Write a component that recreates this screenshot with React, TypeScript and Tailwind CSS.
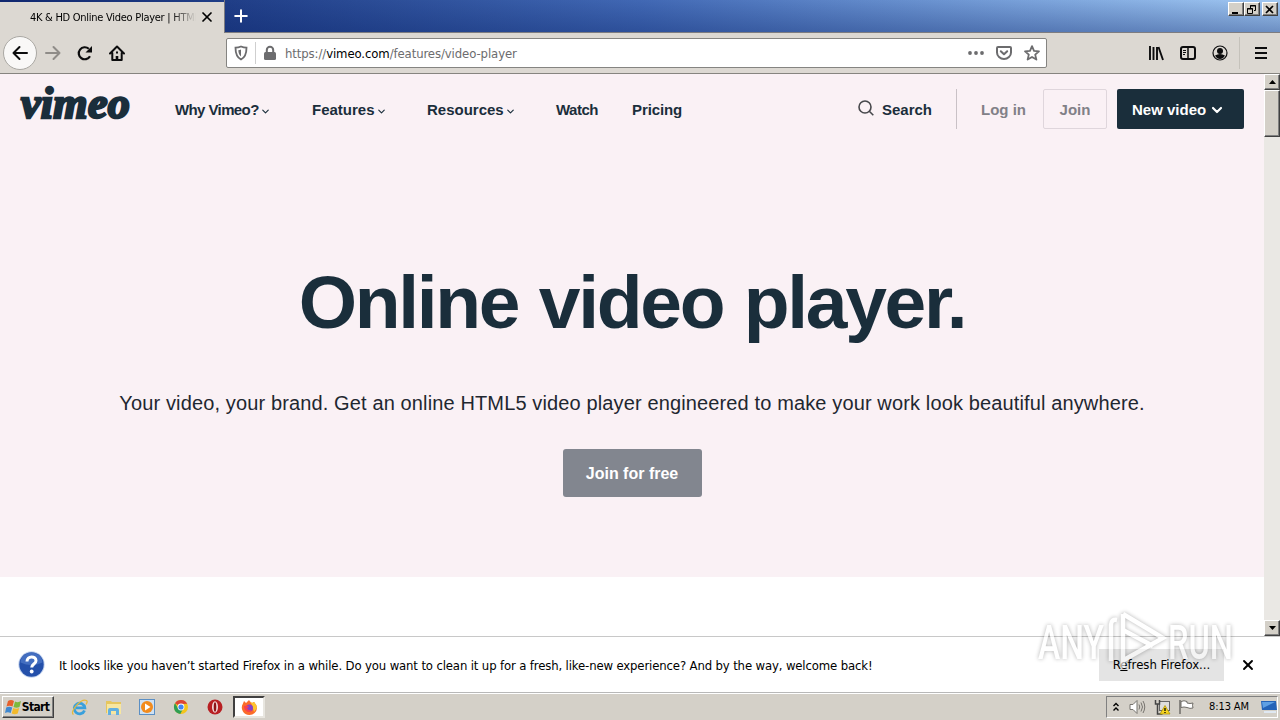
import type { ReactNode } from "react";
import { ChevronDown, Plus, X } from "lucide-react";

const links = [
  { label: "Why Vimeo?", menu: true, className: "w-[137px] tracking-[-0.600px]" },
  { label: "Features", menu: true, className: "w-[115px]" },
  { label: "Resources", menu: true, className: "w-[129px]" },
  { label: "Watch", menu: false, className: "w-[76px] tracking-[-0.500px]" },
  { label: "Pricing", menu: false, className: "w-[60px] tracking-[-0.100px]" },
];

function WinButton({ children, className = "" }: { children: ReactNode; className?: string }) {
  return (
    <div
      className={`flex items-center justify-center bg-[#d4d0c8] border border-t-white border-l-white border-r-[#404040] border-b-[#404040] shadow-[inset_-1px_-1px_0_#808080] ${className}`}
    >
      {children}
    </div>
  );
}

function TitleBar() {
  return (
    <div className="flex h-[33px] bg-linear-to-r from-[#10276f] via-[#4168b4] to-[#a1c8f2] relative">
      <div className="absolute inset-0 border-b border-[#7d7c80] bg-linear-to-b from-transparent to-[#0a246a]/35" />
      <div className="relative mt-[2px] h-[31px] w-[224px] bg-[#dcd8d2] flex items-center">
        <div className="ml-[30px] w-[166px] overflow-hidden whitespace-nowrap text-[11px] leading-[18px] tracking-[-0.270px] mask-r-from-85% mask-r-to-100%">
          4K &amp; HD Online Video Player | HTML5
        </div>
        <X className="ml-[3px] mb-[2px]" size={16} strokeWidth={2.6} />
      </div>
      <div className="relative flex-1 border-l border-[#7d7c80]">
        <Plus className="ml-[6px] mt-[6px] text-white" size={20} strokeWidth={2.4} />
      </div>
      <div className="relative flex pt-[2px] pr-[2px]">
        <WinButton className="w-4 h-[14px]">
          <svg width="12" height="11"><path d="M2 9h6" stroke="#000" strokeWidth="2" /></svg>
        </WinButton>
        <WinButton className="w-4 h-[14px]">
          <svg width="12" height="11" fill="none" stroke="#000">
            <path d="M4.500 4V1.500h5v5H8M4 2h6M1.500 4.500h5v5h-5zM1 5h6" />
          </svg>
        </WinButton>
        <WinButton className="w-4 h-[14px] ml-[2px]">
          <svg width="12" height="11"><path d="M2 2l7 7M9 2l-7 7" stroke="#000" strokeWidth="1.700" /></svg>
        </WinButton>
      </div>
    </div>
  );
}

function ToolBar() {
  return (
    <div className="flex items-center h-[41px] bg-[#dcd8d2] border-b border-[#86847f]">
      <div className="ml-[3px] w-[34px] h-[34px] rounded-full bg-[#f9f8f7] border border-[#aaa8a3] flex items-center justify-center">
        <svg width="16" height="16" fill="none" stroke="#0c0c0d" strokeWidth="2" strokeLinecap="round" strokeLinejoin="round">
          <path d="M15 8H1.500M7.500 2L1.500 8l6 6" />
        </svg>
      </div>
      <svg className="ml-[8px]" width="16" height="16" fill="none" stroke="#8f8c88" strokeWidth="2" strokeLinecap="round" strokeLinejoin="round">
        <path d="M1 8h13.500M8.500 2l6 6-6 6" />
      </svg>
      <svg className="ml-[16px]" width="16" height="16" fill="none" stroke="#0c0c0d" strokeWidth="2.200">
        <path d="M13 11.200A6 6 0 1 1 11.800 3.800" />
        <path d="M15 1v6.500H8.500z" fill="#0c0c0d" stroke="none" />
      </svg>
      <svg className="ml-[16px]" width="16" height="16" fill="none" stroke="#0c0c0d" strokeWidth="2" strokeLinejoin="round" strokeLinecap="round">
        <path d="M1 8.500L8 1.500l7 7M3.300 8v7h9.400V8" />
        <path d="M8 15v-4" strokeWidth="2.600" strokeLinecap="butt" />
        <path d="M7 7.500h2" strokeLinecap="butt" />
      </svg>
      <div className="ml-[101px] w-[821px] h-[30px] bg-white border border-[#858481] rounded-[2px] flex items-center text-[#6c6c6e]">
        <svg className="ml-[6px]" width="16" height="16">
          <path d="M8 1.500c2 .9 3.800 1.200 5.500 1.200 0 5-.7 9.300-5.500 11.800C3.200 12 2.500 7.700 2.500 2.700 4.200 2.700 6 2.400 8 1.500z" fill="none" stroke="#6c6c6e" strokeWidth="1.800" />
          <path d="M8 4.500c-1 .4-1.600.6-2.700.7.2 2.800.9 4.900 2.700 6.300z" fill="#6c6c6e" />
        </svg>
        <div className="ml-[6px] w-px h-[22px] bg-[#cfcfcf]" />
        <svg className="ml-[6px]" width="16" height="16">
          <rect x="2" y="7" width="12" height="8" rx="1.500" fill="#6c6c6e" />
          <path d="M4.800 8V5a3.200 3.200 0 0 1 6.400 0v3" fill="none" stroke="#6c6c6e" strokeWidth="2" />
        </svg>
        <div className="ml-[7px] pt-[2px] flex-1 whitespace-nowrap text-[13px] tracking-[-0.100px]">
          https://<span className="text-black">vimeo.com</span>/features/video-player
        </div>
        <svg width="16" height="16" fill="#6c6c6e">
          <circle cx="2" cy="8" r="1.900" /><circle cx="8" cy="8" r="1.900" /><circle cx="14" cy="8" r="1.900" />
        </svg>
        <svg className="ml-[12px]" width="16" height="16" fill="none" stroke="#6c6c6e" strokeWidth="2" strokeLinecap="round" strokeLinejoin="round">
          <path d="M2 2h12q1 0 1 1v4.500a7 6.500 0 0 1-14 0V3q0-1 1-1zM4.800 6.200L8 9.300l3.200-3.100" />
        </svg>
        <svg className="ml-[12px] mr-[6px]" width="16" height="16" fill="none" stroke="#6c6c6e" strokeWidth="1.800" strokeLinejoin="round">
          <path d="M8 1.200l2 4.700 5 .4-3.800 3.300 1.200 5L8 11.900l-4.400 2.700 1.200-5L1 6.300l5-.4z" />
        </svg>
      </div>
      <svg className="ml-[101px]" width="16" height="16" fill="none" stroke="#0c0c0d" strokeWidth="2">
        <path d="M2 1v14M5.500 2v13M9 2v13M10.500 2l4.500 13" strokeWidth="1.900" />
      </svg>
      <svg className="ml-[16px]" width="16" height="16" fill="none" stroke="#0c0c0d">
        <rect x="1" y="2" width="14" height="12" rx="2" strokeWidth="2" />
        <path d="M8 2v12" strokeWidth="1.500" />
        <path d="M3 5.500h3M3 7.500h3M3 9.500h2" />
      </svg>
      <svg className="ml-[16px]" width="16" height="16">
        <circle cx="8" cy="8" r="7" fill="none" stroke="#0c0c0d" strokeWidth="1.200" />
        <circle cx="8" cy="6" r="3" fill="#0c0c0d" />
        <path d="M3 10.500q5-3 10 0-2 3.500-5 3.500t-5-3.500z" fill="#0c0c0d" />
      </svg>
      <div className="ml-[11px] w-px h-[32px] bg-[#c5c2bb]" />
      <svg className="ml-[13px]" width="16" height="16" stroke="#0c0c0d" strokeWidth="2">
        <path d="M2 3h12M2 8h12M2 13h12" />
      </svg>
    </div>
  );
}

function Header() {
  return (
    <div className="flex items-center h-[70px] pl-5 pr-5 text-[15px] font-bold text-[#1a2e3b]">
      <div className="w-[155px] pl-[1px] pb-[10px] whitespace-nowrap font-['Liberation_Serif',serif] text-[44px] leading-[44px] italic tracking-[0.300px] [-webkit-text-stroke:2.500px_#1a2e3b]">
        vimeo
      </div>
      {links.map((link) => (
        <div key={link.label} className={`flex items-center pt-[2px] whitespace-nowrap ${link.className}`}>
          {link.label}
          {link.menu && <ChevronDown className="ml-[1px] mt-[2px]" size={11} strokeWidth={2.500} />}
        </div>
      ))}
      <div className="flex-1" />
      <svg className="mb-[2px]" width="16" height="16" fill="none" stroke="#47484c" strokeWidth="1.600">
        <circle cx="7" cy="7" r="6" /><path d="M11.300 11.300l4 4" />
      </svg>
      <div className="ml-[8px] pt-[2px] w-[50px] whitespace-nowrap">Search</div>
      <div className="ml-[24px] w-px h-[40px] bg-[#c9c1c6]" />
      <div className="ml-[24px] pt-[2px] w-[45px] whitespace-nowrap text-[#818087]">Log in</div>
      <div className="ml-[17px] w-[64px] h-[40px] pt-[2px] border border-[#dfd6dc] rounded-[2px] flex items-center justify-center text-[#818087]">
        Join
      </div>
      <div className="ml-[10px] w-[127px] h-[40px] pt-[2px] rounded-[2px] bg-[#1a2e3b] text-white flex items-center pl-[15px] whitespace-nowrap">
        New video
        <ChevronDown className="ml-[3px]" size={16} strokeWidth={3.200} />
      </div>
    </div>
  );
}

function Page() {
  return (
    <div className="flex h-[562px]">
      <div className="w-[1264px] bg-white font-['Liberation_Sans',sans-serif]">
        <div className="h-[503px] bg-[#faf1f5] flex flex-col items-center">
          <div className="w-full"><Header /></div>
          <h1 className="mt-[112px] h-[92px] leading-[92px] whitespace-nowrap text-[75px] font-bold tracking-[-2.300px] [word-spacing:2px] text-[#1a2e3b]">
            Online video player.
          </h1>
          <p className="mt-[40px] h-[30px] leading-[30px] whitespace-nowrap text-[20px] tracking-[0.130px] text-[#1f2730]">
            Your video, your brand. Get an online HTML5 video player engineered to make your work look beautiful anywhere.
          </p>
          <div className="mt-[31px] w-[139px] h-[48px] pt-[2px] rounded-[3px] bg-[#82868f] text-white text-[16px] font-bold flex items-center justify-center whitespace-nowrap">
            Join for free
          </div>
        </div>
      </div>
      <div className="w-4 bg-[#eae8e4] flex flex-col">
        <WinButton className="h-4">
          <svg width="7" height="4"><path d="M0 4L3.500 0 7 4z" /></svg>
        </WinButton>
        <WinButton className="h-[47px]">{null}</WinButton>
        <div className="flex-1" />
        <WinButton className="h-4">
          <svg width="7" height="4"><path d="M0 0l3.500 4L7 0z" /></svg>
        </WinButton>
      </div>
    </div>
  );
}

function Notification() {
  return (
    <div className="h-[57px] bg-white border-t border-[#c8c8c8] border-b border-b-[#b8b8b8] flex items-center text-[13px]">
      <svg className="ml-[18px]" width="28" height="28">
        <circle cx="13.500" cy="13.500" r="13.200" fill="#c3d3ee" />
        <circle cx="13.500" cy="13.500" r="12.200" fill="#2450aa" />
        <path d="M2.500 11.500a11 10 0 0 1 22 0q-11 5-22 0z" fill="#5c86d1" opacity=".55" />
        <path d="M9 10.500c0-6 9-6 9-.8 0 3.400-4.300 3.300-4.300 6.800" fill="none" stroke="#fff" strokeWidth="3" />
        <circle cx="13.700" cy="20.500" r="1.900" fill="#fff" />
      </svg>
      <div className="ml-[13px] pt-[2px] flex-1 whitespace-nowrap tracking-[-0.140px]">
        It looks like you haven’t started Firefox in a while. Do you want to clean it up for a fresh, like-new experience? And by the way, welcome back!
      </div>
      <div className="w-[125px] h-[32px] bg-[#e4e4e4] flex items-center justify-center whitespace-nowrap">
        <span>R<u>e</u>fresh Firefox...</span>
      </div>
      <X className="ml-[16px] mr-[24px]" size={16} strokeWidth={2.800} />
    </div>
  );
}

function TaskBar() {
  return (
    <div className="h-[27px] bg-[#d4d0c8] border-t border-white flex items-center text-[11px]">
      <WinButton className="ml-[2px] w-[52px] h-[22px]">
        <svg width="17" height="16">
          <path d="M3 2q3-2 6 0L7.500 7.500q-3-1.500-6 0z" fill="#e6602b" />
          <path d="M10 2.500q3 1.500 6-.5l-1.500 6q-3 1.500-6 0z" fill="#7cb93c" />
          <path d="M1.200 8.500q3-1.500 6 0L5.700 14q-3-1.500-5.700 0z" fill="#3f88d0" />
          <path d="M8.200 9q3 1.500 6 0l-1.500 5.500q-3 1.500-6 0z" fill="#f2b92c" />
        </svg>
        <span className="mr-[2px] font-bold text-[12px] tracking-[-0.650px]">Start</span>
      </WinButton>
      <svg className="ml-[17px]" width="17" height="17" fill="none">
        <path d="M13.500 11.500A5.300 5.300 0 1 1 13.800 8.800H5" stroke="#39a0dc" strokeWidth="2.800" />
        <path d="M2.500 15.500C-2 13 10-1 15.500 1.500q1.500 1-.5 4" stroke="#e5b93c" strokeWidth="1.300" />
      </svg>
      <svg className="ml-[17px]" width="17" height="17">
        <path d="M1 2h5l1 1h9v11H1z" fill="#e6c65e" />
        <path d="M2 5h14v10H2z" fill="#f7e6a0" />
        <path d="M3 16v-5q0-2 2-2h7q2 0 2 2v5h-3v-4H6v4z" fill="#62afe0" />
      </svg>
      <svg className="ml-[17px]" width="16" height="16">
        <rect x=".5" y=".5" width="15" height="15" fill="#cfe1f3" stroke="#5b8fc4" />
        <circle cx="8" cy="8" r="6" fill="#f28b1d" />
        <path d="M6 4.500v7l5.500-3.500z" fill="#fff" />
      </svg>
      <svg className="ml-[18px]" width="16" height="16">
        <circle cx="8" cy="8" r="7" fill="#f4c51c" />
        <path d="M8 8L2 4.300A7 7 0 0 1 14.200 4.800L8 5z" fill="#dc4437" />
        <path d="M2 4.300A7 7 0 0 0 7.300 15L10 10H5.500z" fill="#2f9e54" />
        <circle cx="8" cy="8" r="3.400" fill="#fff" />
        <circle cx="8" cy="8" r="2.600" fill="#4285f4" />
      </svg>
      <svg className="ml-[18px]" width="16" height="16">
        <circle cx="8" cy="8" r="7.500" fill="#b81f22" />
        <ellipse cx="8" cy="8" rx="3" ry="5.800" fill="#f3dcdc" />
        <ellipse cx="8" cy="8" rx="1.300" ry="4.800" fill="#8d1416" />
      </svg>
      <div className="ml-[10px] w-[32px] h-[22px] bg-white border-2 border-t-[#404040] border-l-[#404040] border-r-[#e8e6e0] border-b-[#e8e6e0] flex items-center justify-center">
        <svg width="17" height="17">
          <path d="M8.500 16A7.500 7.500 0 0 1 2 4.500L3 2l2 2 3-3q1 2 3 3l2-1q3 3 3 6a7.500 7.500 0 0 1-7.500 7z" fill="#fb6b2a" />
          <path d="M8 1q1 2 3 3l2-1q3 3 3 6l-3 4-2-7z" fill="#fdc52f" />
          <circle cx="8.500" cy="9" r="3.500" fill="#8442c9" />
          <path d="M3 7q4-1 5 1L6 9q1 3 5 2-2 3-5 1.500T3 7z" fill="#f73f4e" />
        </svg>
      </div>
      <div className="flex-1" />
      <div className="mr-[2px] w-[172px] h-[22px] border border-t-[#808080] border-l-[#808080] border-r-white border-b-white flex items-center">
        <svg className="ml-[5px]" width="8" height="10" fill="none" stroke="#000" strokeWidth="1.400">
          <path d="M1.500 4L4 1.500 6.500 4M1.500 8.500L4 6l2.500 2.500" />
        </svg>
        <svg className="ml-[9px]" width="17" height="16" fill="none" stroke="#77746f">
          <path d="M1 5.500h3l4-4v13l-4-4H1z" fill="#fff" />
          <path d="M10 5.500q1.500 2.500 0 5M12 3.500q3 4.500 0 9M14 2q3.500 6 0 12" />
        </svg>
        <svg className="ml-[8px]" width="17" height="16">
          <rect x="5.500" y="2.500" width="10" height="9" fill="#dededc" stroke="#666" />
          <path d="M1.500 1v4h4V1M3.500 5v10h5" fill="none" stroke="#444" strokeWidth="1.500" />
          <path d="M11 6.500l5 8.500H6z" fill="#f8d51e" stroke="#a88c00" strokeWidth=".7" />
          <path d="M11 9v3M11 13v1" stroke="#000" strokeWidth="1.300" />
        </svg>
        <svg className="ml-[7px]" width="17" height="16" fill="#fff" stroke="#6f6d68">
          <path d="M2 1v14" strokeWidth="1.500" />
          <path d="M3 2.500q3-1.500 6 0v1.500q3 1 6 0-1 2 0 5-3 1-6-.5-3-1-6 0z" />
        </svg>
        <div className="ml-[14px] w-[43px] whitespace-nowrap tracking-[-0.100px]">8:13 AM</div>
        <svg className="ml-[9px]" width="16" height="14">
          <path d="M0 1h15l1 9H1z" fill="#2463b8" />
          <path d="M1 2h13l-12 6z" fill="#5fa0e4" />
          <path d="M3 12h12" stroke="#dfe8f2" strokeWidth="2" />
        </svg>
      </div>
    </div>
  );
}

function Watermark() {
  return (
    <svg
      className="absolute left-[1030px] top-[602px] overflow-visible drop-shadow-[0_0_2px_rgba(0,0,0,0.5)]"
      width="215"
      height="76"
      opacity=".6"
    >
      <g fill="#fff" fontFamily="Roboto, sans-serif" fontSize="48" fontWeight="500">
        <text x="8" y="57" textLength="66" lengthAdjust="spacingAndGlyphs">ANY</text>
        <text x="138" y="57" textLength="65" lengthAdjust="spacingAndGlyphs">RUN</text>
      </g>
      <g fill="none" stroke="#fff" strokeWidth="4.500">
        <path d="M93 12l40 24-41 23M93 28l30 16" />
        <path d="M93 12v54M87 18q-6-1-6 5v36" />
      </g>
    </svg>
  );
}

export default function App() {
  return (
    <div className="relative w-[1280px] h-[720px] overflow-hidden bg-white text-black font-['DejaVu_Sans_Condensed','DejaVu_Sans',sans-serif]">
      <TitleBar />
      <ToolBar />
      <Page />
      <Notification />
      <TaskBar />
      <Watermark />
    </div>
  );
}
